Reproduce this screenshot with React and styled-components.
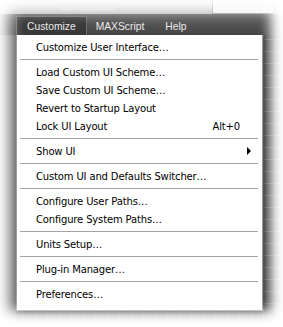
import React from 'react';
import styled, { createGlobalStyle } from 'styled-components';

const GlobalStyle = createGlobalStyle`
  body {
    margin: 0;
    background: #fff;
  }
`;

const Frame = styled.div`
  position: relative;
  width: 283px;
  height: 327px;
  overflow: hidden;
  font-family: "DejaVu Sans", Verdana, sans-serif;
  background-color: #474747;
  display: flex;
  flex-direction: column;
`;

const TitleStrip = styled.div`
  height: 14px;
  background: linear-gradient(#ececec, #bdbdbd);
  display: flex;
  align-items: flex-end;
  justify-content: space-between;
  padding: 0 10px 0 60px;
  color: #d8d8d8;
  font-size: 12px;
  font-weight: bold;
`;

const SearchBox = styled.div`
  width: 60px;
  height: 12px;
  background: #f4f4f4;
  border-left: 1px solid #999;
  border-bottom: 1px solid #999;
`;

const MenuBar = styled.div`
  height: 21px;
  background: linear-gradient(#5e5e5e, #454545);
  display: flex;
  align-items: stretch;
  padding-left: 16px;
`;

const BarItem = styled.div`
  display: flex;
  align-items: center;
  padding: ${p => (p.$open ? '0 10px' : '0 12px 0 9px')};
  margin-top: 2px;
  font-family: "Liberation Sans", Arial, sans-serif;
  font-size: 10.3px;
  color: #ececec;
  background: ${p => (p.$open ? '#393939' : 'transparent')};
  border: 1px solid ${p => (p.$open ? '#6e6e6e' : 'transparent')};
  border-bottom: none;
  ${p => !p.$open && 'border-left: none; border-right: none;'}
`;

const Workspace = styled.div`
  flex: 1;
  display: flex;
  background-color: #3e3e3e;
  background-image:
    repeating-linear-gradient(90deg, transparent 0 11px, #5a5a5a 11px 12px),
    repeating-linear-gradient(0deg, transparent 0 11px, #5a5a5a 11px 12px);
`;

const SideStrip = styled.div`
  width: 16px;
  background: linear-gradient(90deg, #8a8a8a, #5c5c5c);
`;

const Dropdown = styled.div`
  width: 245px;
  align-self: flex-start;
  background: #fff;
  border: 1px solid #8c8c8c;
  border-top: none;
  padding: 3px 0 7px;
  box-shadow: 2px 2px 3px rgba(0, 0, 0, 0.35);
`;

const Item = styled.div`
  height: 18px;
  display: flex;
  align-items: center;
  justify-content: space-between;
  padding: 0 22px 0 19px;
  font-size: 10px;
  letter-spacing: -0.15px;
  color: #000;
  white-space: nowrap;
`;

const Separator = styled.div`
  height: 1px;
  background: #a4a4a4;
  margin: 3px 4px 3px 3px;
`;

const Arrow = styled.span`
  width: 0;
  height: 0;
  border-top: 4px solid transparent;
  border-bottom: 4px solid transparent;
  border-left: 4px solid #000;
  margin-right: -11px;
`;

const Vignette = styled.div`
  position: absolute;
  inset: 0;
  pointer-events: none;
  box-shadow:
    inset 0 0 16px 9px #fff,
    inset -6px -12px 14px 2px #fff;
`;

const groups = [
  [{ label: 'Customize User Interface…' }],
  [
    { label: 'Load Custom UI Scheme…' },
    { label: 'Save Custom UI Scheme…' },
    { label: 'Revert to Startup Layout' },
    { label: 'Lock UI Layout', shortcut: 'Alt+0' },
  ],
  [{ label: 'Show UI', sub: true }],
  [{ label: 'Custom UI and Defaults Switcher…' }],
  [{ label: 'Configure User Paths…' }, { label: 'Configure System Paths…' }],
  [{ label: 'Units Setup…' }],
  [{ label: 'Plug-in Manager…' }],
  [{ label: 'Preferences…' }],
];

export default function App() {
  return (
    <Frame>
      <GlobalStyle />
      <TitleStrip>
        <span>Untitled</span>
        <SearchBox />
      </TitleStrip>
      <MenuBar>
        <BarItem $open>Customize</BarItem>
        <BarItem>MAXScript</BarItem>
        <BarItem>Help</BarItem>
      </MenuBar>
      <Workspace>
        <SideStrip />
        <Dropdown>
          {groups.map((group, gi) => (
            <React.Fragment key={gi}>
              {gi > 0 && <Separator />}
              {group.map(item => (
                <Item key={item.label}>
                  <span>{item.label}</span>
                  {item.shortcut && <span>{item.shortcut}</span>}
                  {item.sub && <Arrow />}
                </Item>
              ))}
            </React.Fragment>
          ))}
        </Dropdown>
      </Workspace>
      <Vignette />
    </Frame>
  );
}
